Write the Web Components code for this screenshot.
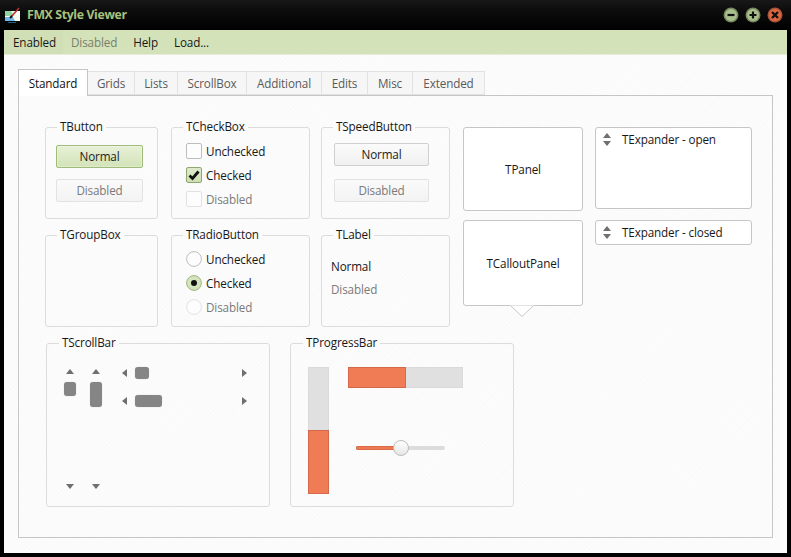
<!DOCTYPE html>
<html lang="en"><head><meta charset="utf-8"><title>FMX Style Viewer</title>
<style>
html,body{margin:0;padding:0;height:557px;background:#000;overflow:hidden}
body{font:11.7px/16px "Open Sans","Liberation Sans",sans-serif;letter-spacing:-.14px;color:#181818}
</style></head><body>
<x-window>
  <x-menubar slot="menu"><x-menu-item active style="padding-right:7px">Enabled</x-menu-item><x-menu-item disabled>Disabled</x-menu-item><x-menu-item>Help</x-menu-item><x-menu-item>Load...</x-menu-item></x-menubar>
  <x-tabs>
    <x-tab slot="tabs" active w="70">Standard</x-tab><x-tab slot="tabs" w="47">Grids</x-tab><x-tab slot="tabs" w="43">Lists</x-tab><x-tab slot="tabs" w="69">ScrollBox</x-tab><x-tab slot="tabs" w="75">Additional</x-tab><x-tab slot="tabs" w="46">Edits</x-tab><x-tab slot="tabs" w="45">Misc</x-tab><x-tab slot="tabs" w="72">Extended</x-tab>
    <x-standard-page></x-standard-page>
  </x-tabs>
</x-window>
<script>
function def(name,css,html,extra){
  customElements.define(name,class extends HTMLElement{
    constructor(){super();const r=this.attachShadow({mode:'open'});
      r.innerHTML='<style>'+css+'</style>'+(typeof html==='function'?html(this):html);}
    connectedCallback(){ if(extra) extra(this); }
  });
}
const TEX='repeating-linear-gradient(135deg,rgba(0,0,0,.007) 0 1px,transparent 1px 3px),repeating-linear-gradient(45deg,rgba(0,0,0,.004) 0 1px,transparent 1px 4px)';
const tri={
 up:'<svg width="8" height="5" viewBox="0 0 8 5"><path d="M4 0L8 5H0z" fill="#6f6f6f"/></svg>',
 down:'<svg width="8" height="5" viewBox="0 0 8 5"><path d="M0 0H8L4 5z" fill="#6f6f6f"/></svg>',
 left:'<svg width="5" height="8" viewBox="0 0 5 8"><path d="M5 0V8L0 4z" fill="#6f6f6f"/></svg>',
 right:'<svg width="5" height="8" viewBox="0 0 5 8"><path d="M0 0L5 4L0 8z" fill="#6f6f6f"/></svg>'
};
def('x-window-button',`:host{display:block;width:16px;height:16px}svg{display:block}`,h=>{
  const k=h.getAttribute('kind');
  const fill=k==='close'?'#e0673f':'#a9bf8c', ring=k==='close'?'#a9553a':'#76865f';
  const g={min:'<path d="M4.5 8h7" stroke="#111" stroke-width="2.2"/>',
           max:'<path d="M4.5 8h7M8 4.5v7" stroke="#111" stroke-width="2.2"/>',
           close:'<path d="M5 5l6 6M11 5l-6 6" stroke="#111" stroke-width="2.4"/>'}[k];
  return `<svg width="16" height="16" viewBox="0 0 16 16"><circle cx="8" cy="8" r="7.5" fill="${ring}"/><circle cx="8" cy="8" r="6" fill="${fill}"/>${g}</svg>`;
});
def('x-window',`
:host{display:flex;flex-direction:column;width:791px;height:557px;box-sizing:border-box;background:#000;padding:0 4px 4px}
.title{height:30px;flex:none;margin:0 -4px;padding:0 8px 0 5px;display:flex;align-items:center;background:linear-gradient(#181818 0,#0e0e0e 30%,#000 100%)}
.name{font:700 12.3px/16px "Open Sans","Liberation Sans",sans-serif;color:#a5c27e;margin-left:6px;flex:1;letter-spacing:-.36px}
.btns{display:flex;gap:6px}
.body{flex:1;min-height:0;display:flex;flex-direction:column;background-color:#fcfcfc;background-image:${TEX}}
svg{display:block}
`,`<div class="title">
<svg width="16" height="20" viewBox="0 0 16 20"><rect x="0" y="6" width="15" height="10" fill="#f4f8ee"/><path d="M0 6h6l3 5H0z" fill="#8fd4a0"/><path d="M0 12h8l2 4H0z" fill="#6fb6ea"/><path d="M10 6h5v4h-3z" fill="#fff"/><path d="M6 12L14 3" stroke="#b8322a" stroke-width="1.6"/><path d="M5 13l2-2" stroke="#111" stroke-width="2"/><rect x="3" y="17" width="8" height="1" fill="#2a5a7a"/></svg>
<span class="name">FMX Style Viewer</span>
<div class="btns"><x-window-button kind="min"></x-window-button><x-window-button kind="max"></x-window-button><x-window-button kind="close"></x-window-button></div>
</div><div class="body"><slot name="menu"></slot><slot></slot></div>`);
def('x-menubar',`:host{display:flex;flex:none;box-sizing:border-box;height:25px;background:#d4e2ba;border-bottom:1px solid #e6eedb;padding-left:1px}`,`<slot></slot>`);
def('x-menu-item',`:host{display:flex;align-items:center;padding:0 8px}
:host([active]){background:#d1dfb7}
:host([disabled]){color:#77806c}`,`<slot></slot>`);
def('x-tab',`:host{display:flex;align-items:center;justify-content:center;box-sizing:border-box;height:24px;margin-top:2px;background:#f6f6f6;border:1px solid #e2e2e2;border-left:0;color:#5a5a5a}
:host([active]){height:27px;margin-top:0;background:#fff;border:1px solid #c6c6c6;border-bottom:0;color:#111;position:relative;z-index:1}`,`<slot></slot>`,h=>{h.style.width=h.getAttribute('w')+'px'});
def('x-tabs',`:host{display:flex;flex-direction:column;flex:1;min-height:0;padding:14px 14px 15px}
.strip{display:flex;flex:none;align-items:flex-start;height:27px;margin-bottom:-1px}
.page{flex:1;min-height:0;border:1px solid #c6c6c6;box-sizing:border-box}`,`<div class="strip"><slot name="tabs"></slot></div><div class="page"><slot></slot></div>`);
def('x-group',`:host{display:block;box-sizing:border-box}
fieldset{box-sizing:border-box;margin:0;padding:0;height:100%;border:1px solid #dcdcdc;border-radius:3px;min-width:0;min-inline-size:0}
legend{margin-left:var(--lm,11px);padding:0 3px;font:inherit;line-height:14px;height:16px;color:#181818}
.c{display:flex;flex-direction:var(--dir,column);gap:var(--gap,0);padding:var(--p,0)}`,h=>`<fieldset><legend>${h.getAttribute('label')||''}</legend><div class="c"><slot></slot></div></fieldset>`);
def('x-button',`:host{display:flex;align-items:center;justify-content:center;box-sizing:border-box;height:23px;padding-bottom:2px;flex:none;border:1px solid #cfcfcf;border-radius:2px;background:linear-gradient(#fbfbfb,#f0f0f0);color:#222}
:host([primary]){background:linear-gradient(#e7f0d7,#d3e3b8);border-color:#9fbb79;box-shadow:inset 0 0 0 1px rgba(255,255,255,.3)}
:host([disabled]){background:linear-gradient(#fafafa,#f3f3f3);border-color:#e2e2e2;color:#7a7a7a}`,`<slot></slot>`);
def('x-check',`:host{display:flex;align-items:center;gap:4px;height:16px}
:host([disabled]){color:#7a7a7a}
.b{box-sizing:border-box;width:16px;height:16px;border:1px solid #bdbdbd;border-radius:2px;background:#fdfdfd;display:block;flex:none}
:host([checked]) .b{background:linear-gradient(#dfeacb,#cfdfb3);border-color:#8fa872}
:host([disabled]) .b{border-color:#e2e2e2}
svg{display:block}`,h=>`<span class="b">${h.hasAttribute('checked')?'<svg width="14" height="14" viewBox="0 0 14 14"><path d="M2.5 7.5L5.5 10.5L11.5 3.5" fill="none" stroke="#111" stroke-width="2.8"/></svg>':''}</span><slot></slot>`);
def('x-radio',`:host{display:flex;align-items:center;gap:4px;height:16px}
:host([disabled]){color:#7a7a7a}
svg{display:block;flex:none}`,h=>{
  const c=h.hasAttribute('checked'),d=h.hasAttribute('disabled');
  return `<svg width="16" height="16" viewBox="0 0 16 16"><circle cx="8" cy="8" r="7.4" fill="${c?'#d6e4bd':'#fdfdfd'}" stroke="${c?'#9db680':d?'#e2e2e2':'#bdbdbd'}"/>${c?'<circle cx="8" cy="8" r="3" fill="#111"/>':''}</svg><slot></slot>`});
def('x-panel',`:host{display:flex;align-items:center;justify-content:center;box-sizing:border-box;padding-bottom:1px;border:1px solid #c6c6c6;border-radius:3px;background:#fff;flex:none}`,`<slot></slot>`);
def('x-callout',`:host{display:block;position:relative;flex:none}
.box{display:flex;align-items:center;justify-content:center;box-sizing:border-box;height:86px;padding-bottom:1px;border:1px solid #c6c6c6;border-radius:3px;background:#fff}
svg{position:absolute;left:47px;top:85px;display:block}`,`<div class="box"><slot></slot></div><svg width="25" height="12" viewBox="0 0 25 12"><path d="M0 0.5L12 11.5L24 0.5" fill="#fff"/><path d="M1 1L12 11.5L23 1" fill="none" stroke="#c6c6c6"/></svg>`);
def('x-expander',`:host{display:block;box-sizing:border-box;border:1px solid #c6c6c6;border-radius:3px;background:#fff}
.h{display:flex;align-items:center;gap:11px;height:22px;padding-left:7px}
.i{display:flex;flex-direction:column;gap:3px}svg{display:block}`,`<div class="h"><div class="i">${tri.up}${tri.down}</div><slot></slot></div>`);
def('x-scroll',`:host{display:flex;flex:none;align-items:center}
:host([v]){flex-direction:column;width:12px;height:122px}
:host([h]){width:127px;height:12px}
svg{display:block;flex:none}
.t{background:#858585;border-radius:3px;flex:none;box-shadow:0 0 1px #bbb}
:host([v]) .a1{margin-top:2px}:host([v]) .t{width:12px;margin-top:8px}:host([v]) .a2{margin-top:auto}
:host([h]) .a1{margin-left:2px}:host([h]) .t{height:12px;margin-left:8px}:host([h]) .a2{margin-left:auto}`,h=>{
  const v=h.hasAttribute('v'),n=h.getAttribute('size');
  return `<span class="a1" style="display:block">${v?tri.up:tri.left}</span><div class="t" style="${v?'height':'width'}:${n}px"></div><span class="a2" style="display:block">${v?tri.down:tri.right}</span>`});
def('x-progress',`:host{display:flex;box-sizing:border-box;flex:none;background:#e0e0e0;border:1px solid #dadada}
:host([v]){width:21px;height:127px;flex-direction:column;justify-content:flex-end}
:host([h]){width:115px;height:21px}
.f{box-sizing:border-box;background:#f07c55;border:1px solid #d5674a}
:host([v]) .f{height:64px;margin:0 -1px -1px}
:host([h]) .f{width:58px;margin:-1px 0 -1px -1px}`,`<div class="f"></div>`);
def('x-slider',`:host{display:flex;align-items:center;position:relative;width:89px;height:16px;flex:none}
.tr{flex:1;height:4px;border-radius:2px;background:#dcdcdc;display:flex}
.f{width:40px;background:#ee7a53;border-radius:2px 0 0 2px;box-shadow:inset 0 0 0 1px #d96b48}
.th{position:absolute;left:37px;top:0;width:16px;height:16px;box-sizing:border-box;border-radius:50%;border:1px solid #bcbcbc;background:linear-gradient(#fff,#e6e6e6)}`,`<div class="tr"><div class="f"></div></div><div class="th"></div>`);
def('x-label',`:host{display:block;height:16px;line-height:15px}:host([disabled]){color:#7a7a7a}`,`<slot></slot>`);
def('x-standard-page',`:host{display:flex;flex-direction:column;padding:23px 0 0 26px}
.top{display:flex;flex:none}
.grid{display:grid;grid-template-columns:126px 150px 129px;grid-auto-rows:100px;row-gap:8px}
.w1{width:113px}.w2{width:139px}.w3{width:129px}
.col1{display:flex;flex-direction:column;gap:9px;width:120px;margin:8px 0 0 13px}
.col2{display:flex;flex-direction:column;gap:11px;width:157px;margin:8px 0 0 12px}
.bottom{display:flex;gap:20px;margin:8px 0 0 1px}
.bottom x-group{width:224px;height:172px}
.right{display:flex;flex-direction:column;align-items:flex-start;gap:52px;margin-left:19px}
.hs{display:flex;flex-direction:column;gap:16px;margin-left:4px}
`,`
<div class="top">
 <div class="grid">
  <x-group class="w1" label="TButton" style="--p:10px 14px 0 10px;--gap:11px"><x-button primary>Normal</x-button><x-button disabled>Disabled</x-button></x-group>
  <x-group class="w2" label="TCheckBox" style="--p:8px 14px 0;--gap:8px"><x-check>Unchecked</x-check><x-check checked>Checked</x-check><x-check disabled>Disabled</x-check></x-group>
  <x-group class="w3" label="TSpeedButton" style="--p:8px 20px 0 12px;--gap:13px"><x-button>Normal</x-button><x-button disabled>Disabled</x-button></x-group>
  <x-group class="w1" label="TGroupBox"></x-group>
  <x-group class="w2" label="TRadioButton" style="--p:8px 14px 0;--gap:8px"><x-radio>Unchecked</x-radio><x-radio checked>Checked</x-radio><x-radio disabled>Disabled</x-radio></x-group>
  <x-group class="w3" label="TLabel" style="--p:16px 9px 0;--gap:7px"><x-label>Normal</x-label><x-label disabled>Disabled</x-label></x-group>
 </div>
 <div class="col1"><x-panel style="height:84px">TPanel</x-panel><x-callout>TCalloutPanel</x-callout></div>
 <div class="col2"><x-expander style="height:82px">TExpander - open</x-expander><x-expander style="height:25px">TExpander - closed</x-expander></div>
</div>
<div class="bottom">
 <x-group label="TScrollBar" style="--p:16px 0 0 17px;--dir:row;--gap:14px;--lm:12px">
   <x-scroll v size="14"></x-scroll><x-scroll v size="25"></x-scroll>
   <div class="hs"><x-scroll h size="14"></x-scroll><x-scroll h size="27"></x-scroll></div>
 </x-group>
 <x-group label="TProgressBar" style="--p:16px 0 0 17px;--dir:row;--lm:12px">
   <x-progress v></x-progress>
   <div class="right"><x-progress h></x-progress><x-slider style="margin-left:8px"></x-slider></div>
 </x-group>
</div>`);
</script>
</body></html>
